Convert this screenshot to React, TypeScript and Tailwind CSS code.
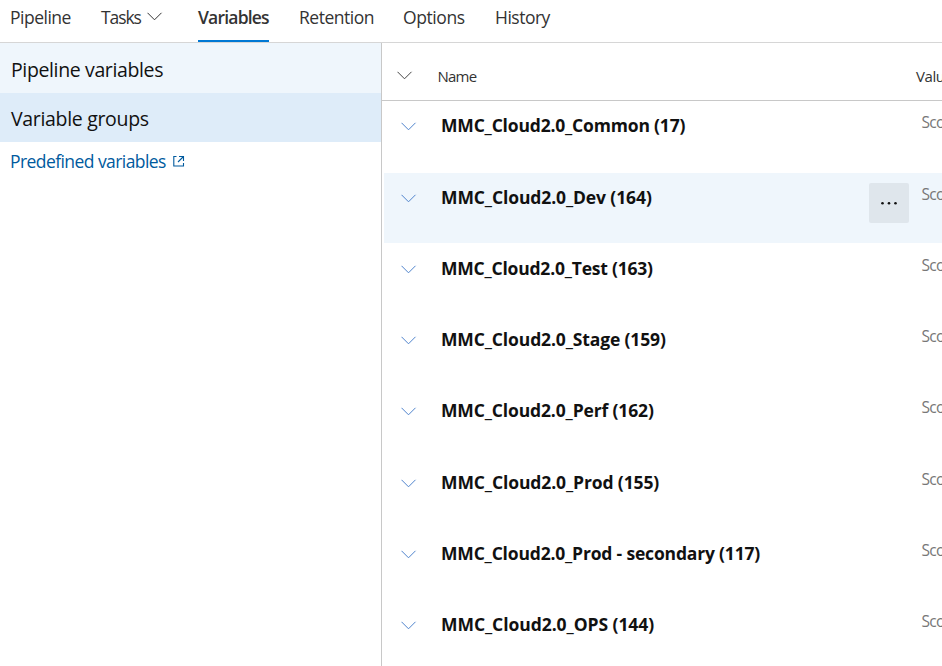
import React from "react";

const groups = [
  { name: "MMC_Cloud2.0_Common (17)", spacing: "tracking-[-0.18px] mb-0.5" },
  { name: "MMC_Cloud2.0_Dev (164)", spacing: "tracking-[-0.11px] mb-px", active: true },
  { name: "MMC_Cloud2.0_Test (163)", spacing: "tracking-[-0.21px] mb-px" },
  { name: "MMC_Cloud2.0_Stage (159)", spacing: "tracking-[-0.13px] mb-px" },
  { name: "MMC_Cloud2.0_Perf (162)", spacing: "tracking-[-0.14px] mb-0.5" },
  { name: "MMC_Cloud2.0_Prod (155)", spacing: "tracking-[-0.11px] mb-px" },
  { name: "MMC_Cloud2.0_Prod - secondary (117)", spacing: "tracking-[-0.18px] mb-px" },
  { name: "MMC_Cloud2.0_OPS (144)", spacing: "tracking-[-0.06px] mb-px" },
];

function Chevron({ className }: { className: string }) {
  return (
    <svg width="16" height="9" viewBox="0 0 16 9" fill="none" className={`shrink-0 ${className}`}>
      <path d="M0.5 0.8L7.5 7.8L14.5 0.8" stroke="currentColor" strokeWidth="1" />
    </svg>
  );
}

export default function App() {
  return (
    <div className="flex h-[666px] w-[942px] flex-col overflow-hidden bg-white font-['Open_Sans',sans-serif] text-[#333]">
      <nav className="flex h-[43px] shrink-0 whitespace-nowrap border-b border-[#d6d6d6] pl-[10px] text-[17.5px] leading-[35px]">
        <div className="w-[91px] tracking-[-0.49px]">Pipeline</div>
        <div className="flex w-[97px] tracking-[-1.1px]">
          <span className="w-[46px]">Tasks</span>
          <Chevron className="mt-[12px]" />
        </div>
        <div className="h-[42px] w-[71px] border-b-2 border-[#0078d4] font-semibold tracking-[-0.8px]">Variables</div>
        <div className="ml-[30px] w-[104px] tracking-[-0.48px]">Retention</div>
        <div className="w-[92px] tracking-[-0.4px]">Options</div>
        <div className="tracking-[-0.5px]">History</div>
      </nav>
      <div className="flex min-h-0 flex-1">
        <aside className="w-[382px] shrink-0 whitespace-nowrap border-r border-[#c8c8c8]">
          <div className="h-[50px] bg-[#eff6fc] pl-[11px] text-[19.5px] leading-[54px] tracking-[-0.37px] text-[#111]">Pipeline variables</div>
          <div className="h-[49px] bg-[#deecf9] pl-[11px] text-[19.5px] leading-[52px] tracking-[-0.32px] text-[#111]">Variable groups</div>
          <a className="flex pl-[10px] text-[17.5px] leading-[39px] tracking-[-0.57px] text-[#005a9e]">
            <span className="w-[163px]">Predefined variables</span>
            <svg width="12" height="12" viewBox="0 0 12 12" fill="none" stroke="currentColor" strokeWidth="1.1" className="mt-[13px]">
              <path d="M3.5 1.5H0.8V11H10.5V8M6 1.5H10.5V6M10.5 1.5L5 7" />
            </svg>
          </a>
        </aside>
        <main className="min-w-0 flex-1 overflow-hidden whitespace-nowrap">
          <div className="flex h-[58px] border-b border-[#c8c8c8] pl-[15px] text-[15px] leading-[67px] tracking-[-0.7px]">
            <Chevron className="mt-[28px] text-[#444]" />
            <span className="ml-[24.4px] w-[478.6px] shrink-0">Name</span>
            <span className="tracking-[-0.4px]">Value</span>
          </div>
          <div className="flex flex-col pl-[2px]">
            {groups.map((group) => (
              <div key={group.name} className={`flex h-[70px] shrink-0 pl-[17px] ${group.spacing} ${group.active ? "bg-[#eff6fc]" : ""}`}>
                <Chevron className="mt-[20.5px] text-[#4f83cc]" />
                <div className="ml-[24px] w-[427px] shrink-0 text-[17.5px] font-bold leading-[48px] text-[#111]">{group.name}</div>
                <div className="ml-px w-[52.5px] shrink-0 pt-[10px]">
                  {group.active && (
                    <button className="flex h-10 w-10 items-center justify-center rounded-[2px] bg-[#dfe6ec]">
                      <svg width="18" height="4" viewBox="0 0 18 4" fill="#111">
                        <circle cx="2.5" cy="2.2" r="1.3" />
                        <circle cx="9" cy="2.2" r="1.3" />
                        <circle cx="15.5" cy="2.2" r="1.3" />
                      </svg>
                    </button>
                  )}
                </div>
                <span className="text-[15.5px] leading-[42px] tracking-[-0.7px] text-[#777]">Scopes</span>
              </div>
            ))}
          </div>
        </main>
      </div>
    </div>
  );
}
